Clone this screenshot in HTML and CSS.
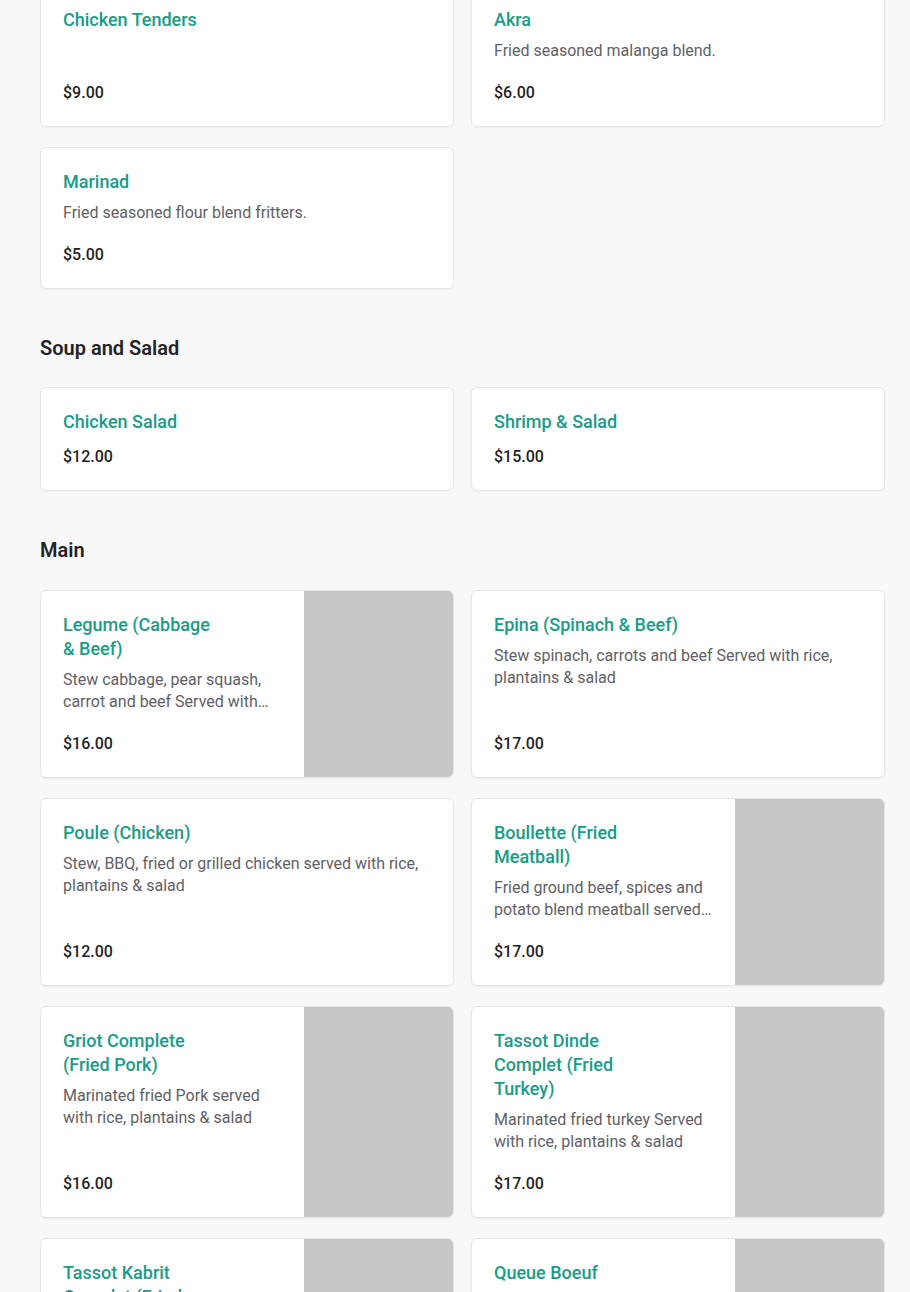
FILE: index.html
```html
<!DOCTYPE html>
<html lang="en">
<head>
<meta charset="utf-8">
<title>Menu</title>
<link rel="stylesheet" href="styles.css">
</head>
<body>
<main class="menu">
  <section class="section first">
    <div class="grid">
      <article class="card">
        <div class="body">
          <h3 class="title">Chicken Tenders</h3>
          <p class="desc empty"></p>
          <div class="price">$9.00</div>
        </div>
      </article>
      <article class="card">
        <div class="body">
          <h3 class="title">Akra</h3>
          <p class="desc">Fried seasoned malanga blend.</p>
          <div class="price">$6.00</div>
        </div>
      </article>
      <article class="card">
        <div class="body">
          <h3 class="title">Marinad</h3>
          <p class="desc">Fried seasoned flour blend fritters.</p>
          <div class="price">$5.00</div>
        </div>
      </article>
    </div>
  </section>

  <section class="section soup-section">
    <h2 class="heading">Soup and Salad</h2>
    <div class="grid">
      <article class="card">
        <div class="body">
          <h3 class="title">Chicken Salad</h3>
          <div class="price">$12.00</div>
        </div>
      </article>
      <article class="card">
        <div class="body">
          <h3 class="title">Shrimp &amp; Salad</h3>
          <div class="price">$15.00</div>
        </div>
      </article>
    </div>
  </section>

  <section class="section main-section">
    <h2 class="heading">Main</h2>
    <div class="grid">
      <article class="card has-img">
        <div class="body">
          <h3 class="title">Legume (Cabbage &amp; Beef)</h3>
          <p class="desc">Stew cabbage, pear squash, carrot and beef Served with rice, plantains &amp; salad</p>
          <div class="price">$16.00</div>
        </div>
        <div class="img"></div>
      </article>
      <article class="card">
        <div class="body">
          <h3 class="title">Epina (Spinach &amp; Beef)</h3>
          <p class="desc">Stew spinach, carrots and beef Served with rice, plantains &amp; salad</p>
          <div class="price">$17.00</div>
        </div>
      </article>
      <article class="card">
        <div class="body">
          <h3 class="title">Poule (Chicken)</h3>
          <p class="desc">Stew, BBQ, fried or grilled chicken served with rice, plantains &amp; salad</p>
          <div class="price">$12.00</div>
        </div>
      </article>
      <article class="card has-img">
        <div class="body">
          <h3 class="title">Boullette (Fried Meatball)</h3>
          <p class="desc">Fried ground beef, spices and potato blend meatball served with rice, plantains &amp; salad</p>
          <div class="price">$17.00</div>
        </div>
        <div class="img"></div>
      </article>
      <article class="card has-img">
        <div class="body">
          <h3 class="title">Griot Complete (Fried Pork)</h3>
          <p class="desc">Marinated fried Pork served with rice, plantains &amp; salad</p>
          <div class="price">$16.00</div>
        </div>
        <div class="img"></div>
      </article>
      <article class="card has-img">
        <div class="body">
          <h3 class="title">Tassot Dinde Complet (Fried Turkey)</h3>
          <p class="desc">Marinated fried turkey Served with rice, plantains &amp; salad</p>
          <div class="price">$17.00</div>
        </div>
        <div class="img"></div>
      </article>
      <article class="card has-img">
        <div class="body">
          <h3 class="title">Tassot Kabrit Complet (Fried Goat)</h3>
          <p class="desc">Marinated fried goat Served with rice, plantains &amp; salad</p>
          <div class="price">$18.00</div>
        </div>
        <div class="img"></div>
      </article>
      <article class="card has-img">
        <div class="body">
          <h3 class="title">Queue Boeuf</h3>
          <p class="desc">Stewed oxtail served with rice, plantains &amp; salad</p>
          <div class="price">$20.00</div>
        </div>
        <div class="img"></div>
      </article>
    </div>
  </section>
</main>
</body>
</html>
```

FILE: styles.css
```css
* { box-sizing: border-box; }

html, body {
  margin: 0;
  padding: 0;
  background: #f8f8f9;
  font-family: Roboto, "Noto Sans", "Liberation Sans", sans-serif;
  color: #1f1f1f;
}

.menu {
  padding: 0 25px 40px 40px;
  margin-top: -15px;
}

.section {
  margin-top: 46px;
}

.section.first {
  margin-top: 0;
}

.heading {
  margin: 0 0 25px 0;
  font-size: 20px;
  line-height: 26px;
  font-weight: 600;
  color: #222326;
}

.soup-section .heading {
  margin-bottom: 26px;
}

.main-section .heading {
  margin-bottom: 27px;
}

.grid {
  display: grid;
  grid-template-columns: 1fr 1fr;
  column-gap: 17px;
  row-gap: 20px;
}

.card {
  display: flex;
  background: #ffffff;
  border: 1px solid #e6e6e8;
  border-radius: 6px;
  box-shadow: 0 1px 2px rgba(0, 0, 0, 0.04);
  overflow: hidden;
}

.body {
  flex: 1 1 auto;
  min-width: 0;
  display: flex;
  flex-direction: column;
  padding: 22px 22px 22px 22px;
}

.title {
  margin: 0;
  font-size: 18px;
  line-height: 24px;
  font-weight: 500;
  color: #1a9c86;
}

.has-img .title {
  max-width: 156px;
}

.desc {
  margin: 8px 0 0 0;
  font-size: 16px;
  line-height: 22px;
  color: #5f6166;
  display: -webkit-box;
  -webkit-line-clamp: 2;
  -webkit-box-orient: vertical;
  overflow: hidden;
}

.desc.empty {
  min-height: 22px;
}

.price {
  margin-top: auto;
  padding-top: 12px;
  font-size: 16px;
  line-height: 22px;
  font-weight: 500;
  color: #1f1f1f;
}

.desc + .price {
  padding-top: 20px;
}

.img {
  flex: 0 0 149px;
  background: #c6c7c9;
}
```
